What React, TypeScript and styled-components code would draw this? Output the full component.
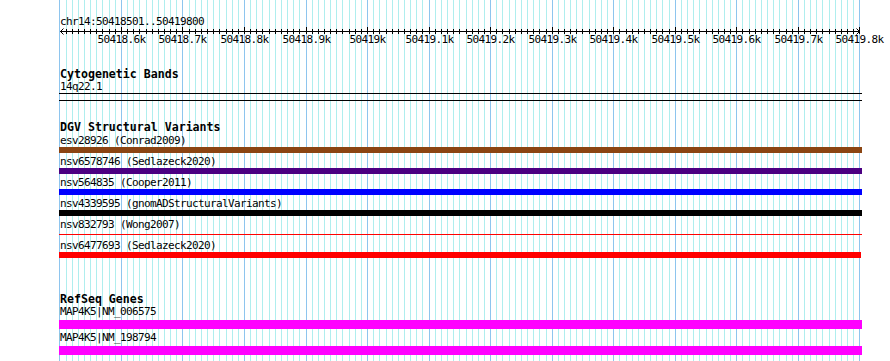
import React from "react";
import styled, { createGlobalStyle } from "styled-components";

const GlobalStyle = createGlobalStyle`
  html, body { margin: 0; padding: 0; background: #ffffff; }
  #root { width: 890px; height: 361px; }
`;

const START = 50418501;
const SCALE = 800 / 1300;
const toX = (bp: number) => Math.round(60 + (bp - START) * SCALE);

const gridStops: { x: number; major: boolean; bp: number }[] = [];
for (let bp = 50418500; bp <= 50419800; bp += 10) {
  gridStops.push({ x: toX(bp), major: bp % 100 === 0, bp });
}

const fmtK = (bp: number) => {
  const k = bp / 1000;
  return Number.isInteger(k) ? `${k}k` : `${k.toFixed(1)}k`;
};

const MONO = `"DejaVu Sans Mono", "Liberation Mono", monospace`;

const Page = styled.div`
  position: relative;
  width: 890px;
  height: 361px;
  overflow: hidden;
  background: #ffffff;
`;

const GridLayer = styled.svg`
  position: absolute;
  left: 0;
  top: 0;
  z-index: 0;
  pointer-events: none;
`;

const Content = styled.div`
  position: relative;
  z-index: 1;
  display: flex;
  flex-direction: column;
  width: 890px;
`;

const RulerHeader = styled.div`
  margin-top: 16px;
  padding-left: 60px;
  font-family: ${MONO};
  font-size: 11px;
  letter-spacing: -0.62px;
  line-height: 11px;
  height: 11px;
  color: #000;
  white-space: pre;
`;

const RulerSvg = styled.svg`
  display: block;
  width: 890px;
  height: 21px;
`;

const Track = styled.section<{ $top: number }>`
  display: flex;
  flex-direction: column;
  margin-top: ${(p) => p.$top}px;
  margin-left: 59px;
  width: 803px;
`;

const TrackTitle = styled.div<{ $after: number }>`
  font-family: ${MONO};
  font-weight: bold;
  font-size: 11.6px;
  line-height: 11px;
  height: 11px;
  padding-left: 1px;
  margin-bottom: ${(p) => p.$after}px;
  color: #000;
  white-space: pre;
`;

const FeatureRow = styled.div<{ $gap: number; $after: number }>`
  display: flex;
  flex-direction: column;
  row-gap: ${(p) => p.$gap}px;
  margin-bottom: ${(p) => p.$after}px;
`;

const FeatureLabel = styled.div`
  font-family: ${MONO};
  font-size: 11px;
  letter-spacing: -0.62px;
  line-height: 13px;
  height: 13px;
  padding-left: 1px;
  color: #000;
  white-space: pre;
`;

const Bar = styled.div<{ $color: string; $height: number; $width?: number }>`
  height: ${(p) => p.$height}px;
  width: ${(p) => (p.$width ? `${p.$width}px` : "100%")};
  background: ${(p) => p.$color};
`;

const SpanSlot = styled.div`
  height: 6px;
  display: flex;
  align-items: center;
`;

const SpanLine = styled.div<{ $color: string }>`
  flex: 1;
  height: 1px;
  margin-top: 1px;
  background: ${(p) => p.$color};
`;

const BandBox = styled.div`
  box-sizing: border-box;
  height: 8px;
  width: 100%;
  border-top: 1px solid #000;
  border-bottom: 1px solid #000;
`;

type Feature = { label: string; color: string; thin?: boolean; width?: number };

const dgv: Feature[] = [
  { label: "esv28926 (Conrad2009)", color: "#8b4513" },
  { label: "nsv6578746 (Sedlazeck2020)", color: "#4b0082" },
  { label: "nsv564835 (Cooper2011)", color: "#0000ff" },
  { label: "nsv4339595 (gnomADStructuralVariants)", color: "#000000" },
  { label: "nsv832793 (Wong2007)", color: "#ff0000", thin: true },
  { label: "nsv6477693 (Sedlazeck2020)", color: "#ff0000", width: 802 },
];

const genes = ["MAP4K5|NM_006575", "MAP4K5|NM_198794"];

const Grid: React.FC = () => (
  <GridLayer width={890} height={361} viewBox="0 0 890 361">
    {gridStops.map((g) => (
      <line
        key={g.bp}
        x1={g.x + 0.5}
        x2={g.x + 0.5}
        y1={0}
        y2={361}
        stroke={g.major ? "#8ec5ee" : "#afeeee"}
        strokeWidth={1}
      />
    ))}
  </GridLayer>
);

const Ruler: React.FC = () => {
  const ticks = gridStops.filter((g) => g.bp >= 50418510);
  const labels = gridStops.filter((g) => g.major && g.bp >= 50418600);
  return (
    <RulerSvg viewBox="0 0 890 21">
      <line x1={60} x2={860} y1={4.5} y2={4.5} stroke="#000" strokeWidth={1} />
      <polyline points="63.5,1.5 60.5,4.5 63.5,7.5" fill="none" stroke="#000" strokeWidth={1} />
      <polyline points="856.5,1.5 859.5,4.5 856.5,7.5" fill="none" stroke="#000" strokeWidth={1} />
      {ticks.map((t) => (
        <line
          key={t.bp}
          x1={t.x + 0.5}
          x2={t.x + 0.5}
          y1={t.major ? 0 : 2}
          y2={7}
          stroke="#000"
          strokeWidth={1}
        />
      ))}
      {labels.map((l) => {
        const text = fmtK(l.bp);
        return (
          <text
            key={l.bp}
            x={l.x + 0.5 - (text.length * 6) / 2}
            y={16}
            fontFamily={MONO}
            fontSize={11}
            letterSpacing={-0.62}
            fill="#000"
          >
            {text}
          </text>
        );
      })}
    </RulerSvg>
  );
};

export default function App() {
  return (
    <>
      <GlobalStyle />
      <Page>
        <Grid />
        <Content>
          <RulerHeader>chr14:50418501..50419800</RulerHeader>
          <Ruler />

          <Track $top={21}>
            <TrackTitle $after={0}>Cytogenetic Bands</TrackTitle>
            <FeatureLabel>14q22.1</FeatureLabel>
            <BandBox />
          </Track>

          <Track $top={21}>
            <TrackTitle $after={1}>DGV Structural Variants</TrackTitle>
            {dgv.map((f, i) => (
              <FeatureRow key={f.label} $gap={0} $after={i === dgv.length - 1 ? 0 : 2}>
                <FeatureLabel>{f.label}</FeatureLabel>
                {f.thin ? (
                  <SpanSlot>
                    <SpanLine $color={f.color} />
                  </SpanSlot>
                ) : (
                  <Bar $color={f.color} $height={6} $width={f.width} />
                )}
              </FeatureRow>
            ))}
          </Track>

          <Track $top={36}>
            <TrackTitle $after={0}>RefSeq Genes</TrackTitle>
            {genes.map((g, i) => (
              <FeatureRow key={g} $gap={2} $after={i === genes.length - 1 ? 0 : 2}>
                <FeatureLabel>{g}</FeatureLabel>
                <Bar $color="#ff00ff" $height={9} />
              </FeatureRow>
            ))}
          </Track>
        </Content>
      </Page>
    </>
  );
}
